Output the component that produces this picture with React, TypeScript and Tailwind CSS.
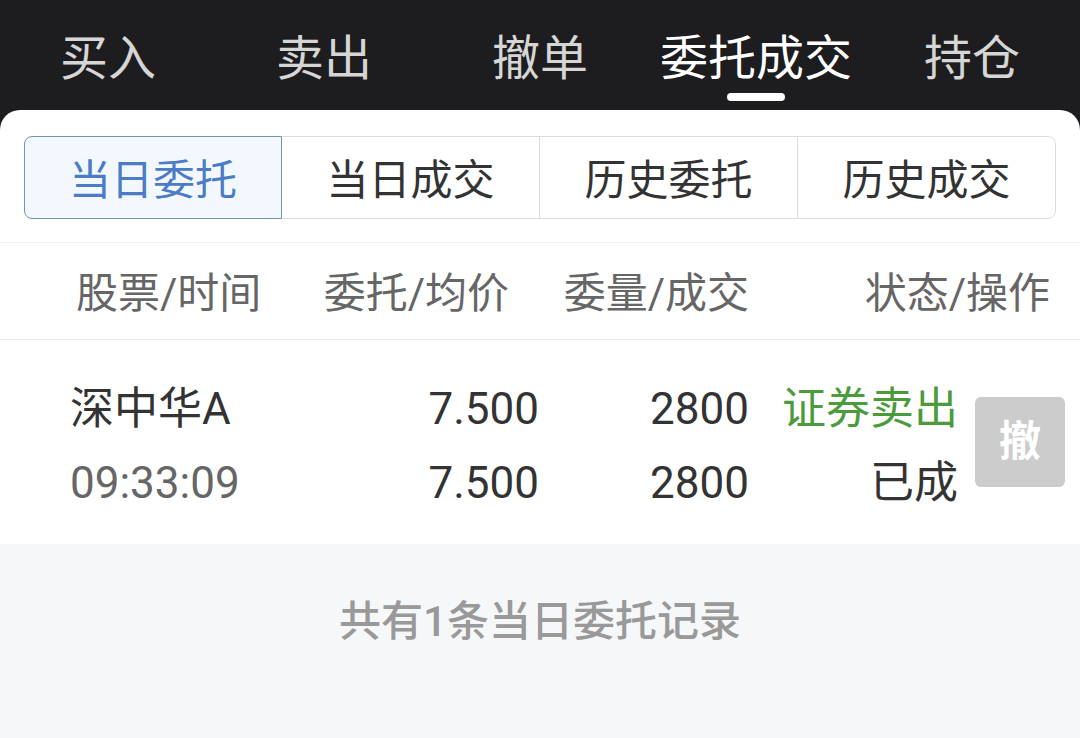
const TABS = ["买入", "卖出", "撤单", "委托成交", "持仓"];
const ACTIVE_TAB = 3;

const SEGMENTS = ["当日委托", "当日成交", "历史委托", "历史成交"];

const FONT = "font-['Roboto','Noto_Sans_CJK_SC',sans-serif]";

function TopTabs() {
  return (
    <div className="flex h-[110px] bg-[#1d1d1f]">
      {TABS.map((t, i) => (
        <div key={t} className="flex w-[216px] flex-col items-center pt-[29px]">
          <span
            className={`text-[48px] leading-[60px] ${
              i === ACTIVE_TAB ? "text-white" : "text-[#d6d6d6]"
            }`}
          >
            {t}
          </span>
          {i === ACTIVE_TAB && (
            <span className="mt-[4px] h-[8px] w-[58px] rounded-full bg-white" />
          )}
        </div>
      ))}
    </div>
  );
}

function Segments() {
  return (
    <div className="flex px-[24px] pt-[26px]">
      {SEGMENTS.map((s, i) => {
        const active = i === 0;
        return (
          <div
            key={s}
            className={`flex h-[83px] items-center justify-center border pt-[5px] text-[42px] ${
              active
                ? "relative z-10 w-[258px] rounded-l-[8px] border-[#7393b3] bg-[#f3f8fe] text-[#4b7cc5]"
                : "-ml-px w-[259px] border-[#dcdcdc] bg-white text-[#333333]"
            } ${i === SEGMENTS.length - 1 ? "rounded-r-[8px]" : ""}`}
          >
            {s}
          </div>
        );
      })}
    </div>
  );
}

function HeaderRow() {
  return (
    <div className="mt-[23px] flex h-[98px] items-center border-y border-t-[#f2f2f2] border-b-[#ebebeb] pt-[5px] text-[42px] text-[#666666]">
      <div className="w-[300px] pl-[76px]">股票/时间</div>
      <div className="w-[209px] text-right">委托/均价</div>
      <div className="w-[240px] text-right">委量/成交</div>
      <div className="w-[301px] text-right">状态/操作</div>
    </div>
  );
}

function OrderRow() {
  return (
    <div className="flex h-[204px] items-center text-[44px] leading-[74px] text-[#333333]">
      <div className="w-[300px] pl-[70px] pt-[8px]">
        <div>深中华A</div>
        <div className="text-[#666666]">09:33:09</div>
      </div>
      <div className="w-[239px] pt-[8px] text-right">
        <div>7.500</div>
        <div>7.500</div>
      </div>
      <div className="w-[210px] pt-[8px] text-right">
        <div>2800</div>
        <div>2800</div>
      </div>
      <div className="w-[209px] pt-[8px] text-right">
        <div className="text-[#4a9b3b]">证券卖出</div>
        <div>已成</div>
      </div>
      <button className="ml-[17px] flex h-[90px] w-[90px] items-center justify-center rounded-[6px] bg-[#cccccc] text-[42px] font-bold text-white">
        撤
      </button>
    </div>
  );
}

export default function App() {
  return (
    <div className={`flex h-[738px] w-[1080px] flex-col overflow-hidden bg-[#1d1d1f] ${FONT}`}>
      <TopTabs />
      <div className="flex flex-1 flex-col overflow-hidden rounded-t-[20px] bg-white">
        <Segments />
        <HeaderRow />
        <OrderRow />
        <div className="flex-1 bg-[#f6f7f9] pt-[57px] text-center text-[42px] font-medium leading-[42px] text-[#999999]">
          共有1条当日委托记录
        </div>
      </div>
    </div>
  );
}
